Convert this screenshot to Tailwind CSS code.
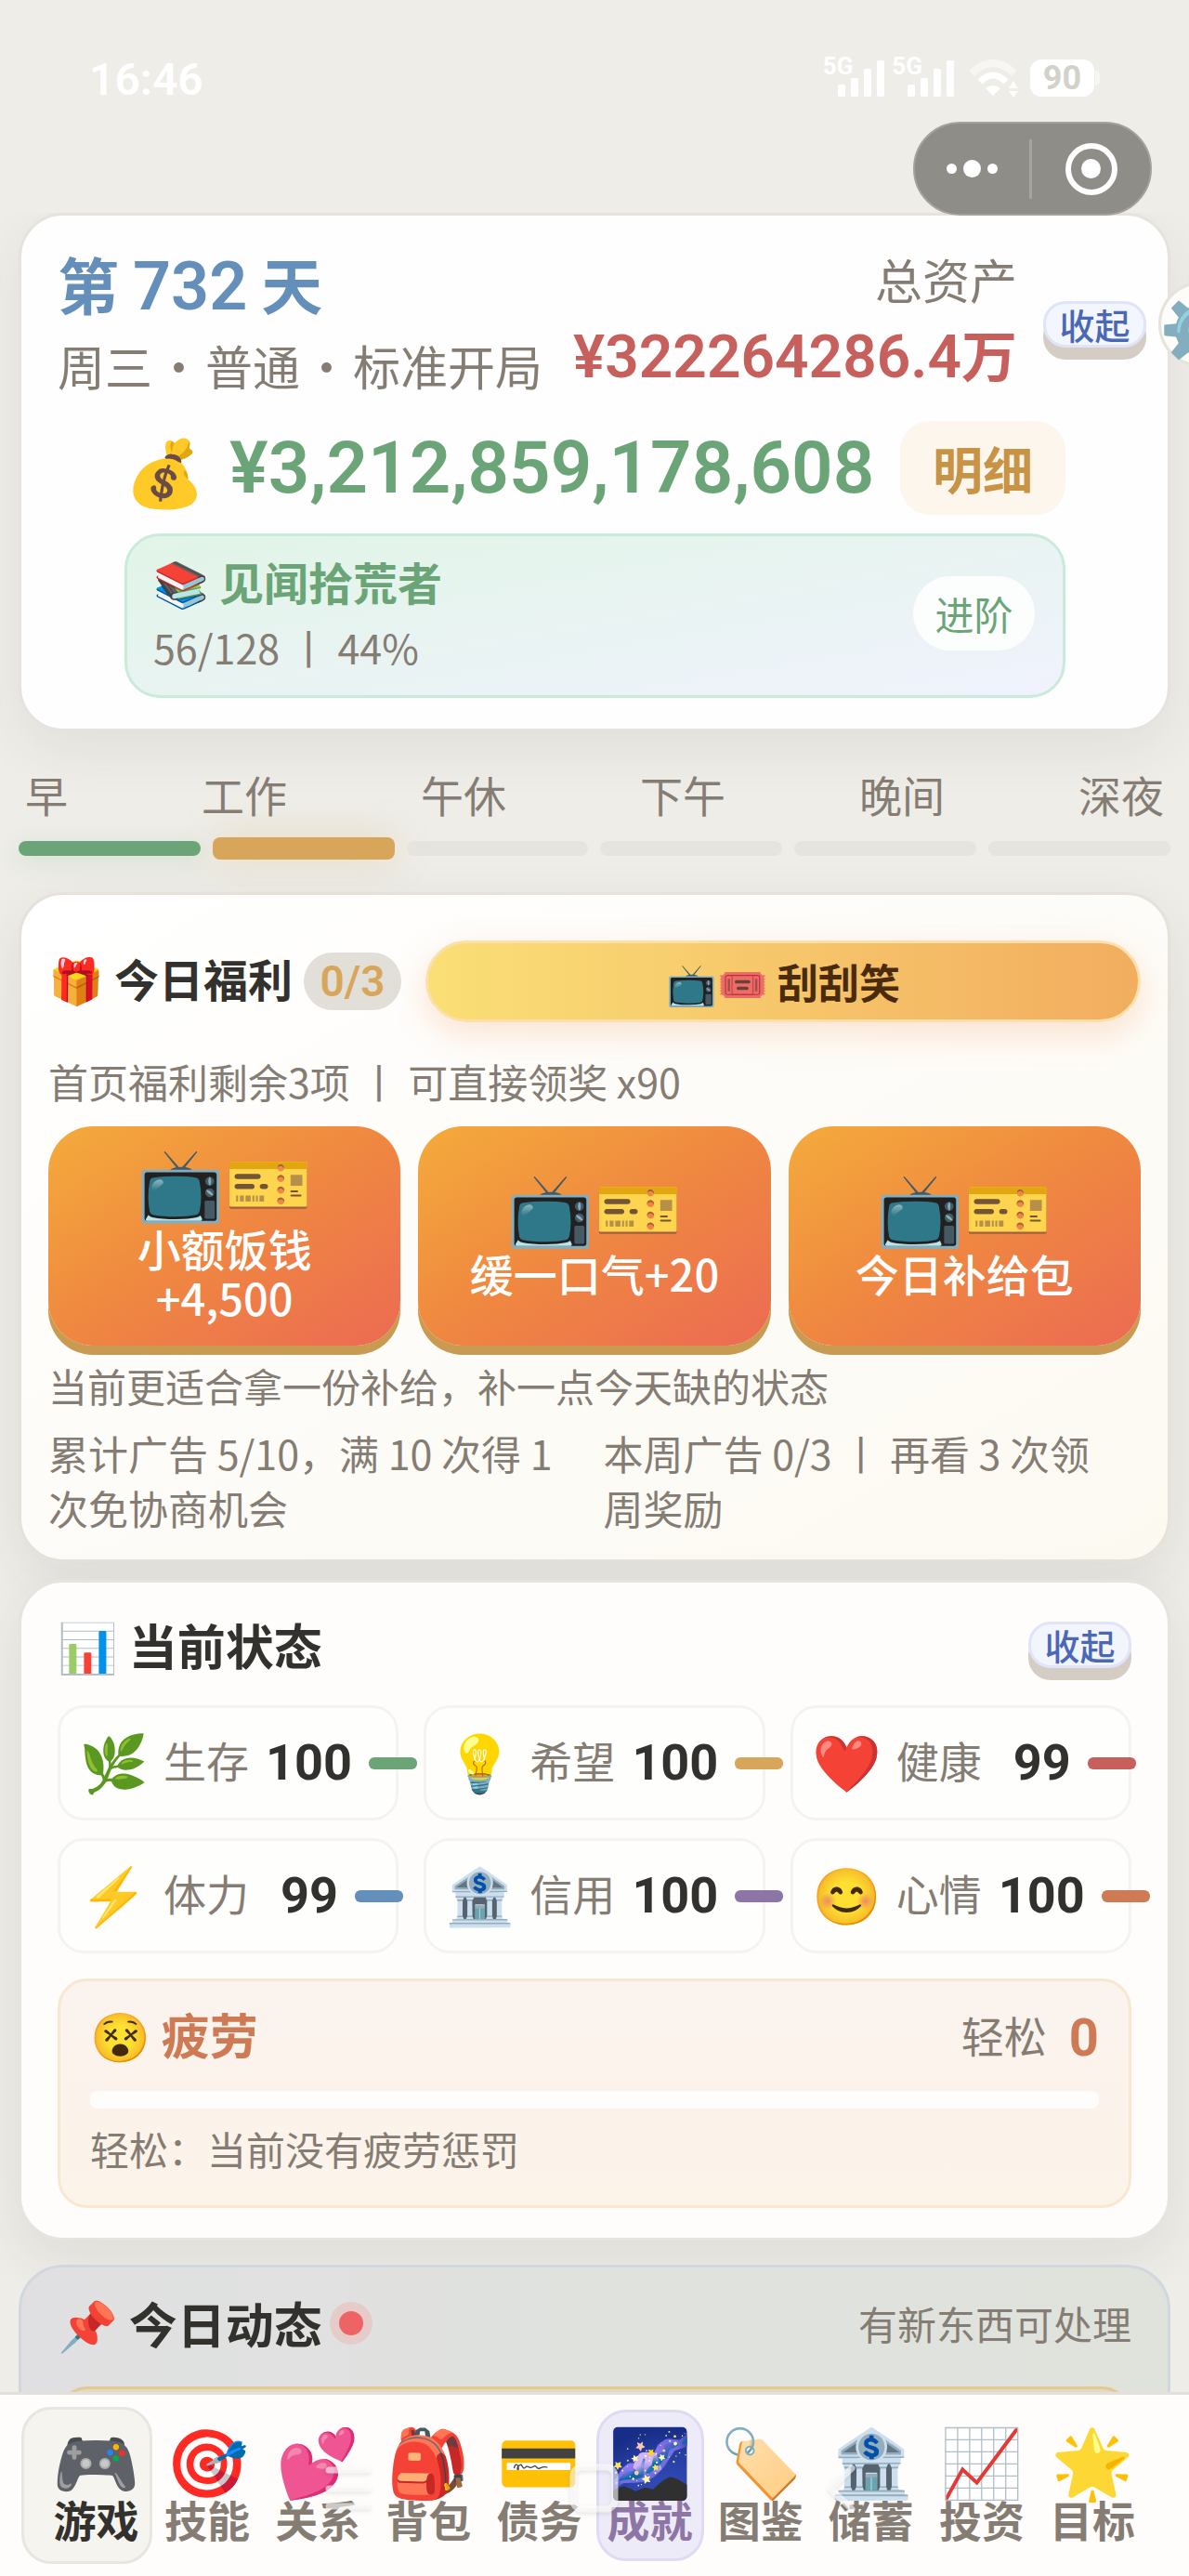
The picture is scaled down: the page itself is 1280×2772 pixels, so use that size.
<!DOCTYPE html>
<html lang="zh-CN">
<head>
    <meta charset="UTF-8">
    <meta name="viewport" content="width=device-width, initial-scale=1.0">
    <title>第 732 天</title>
    <script src="https://cdn.jsdelivr.net/npm/@tailwindcss/browser@4"></script>
</head>
<body class="relative flex h-screen flex-col overflow-hidden bg-[#eeede8] font-['Noto_Sans_CJK_SC',sans-serif] text-[#857d74]">

    <!-- Status bar -->
    <header class="mt-15 flex h-12 shrink-0 items-center justify-between px-24 text-white">
        <time class="pt-1 font-['Roboto',sans-serif] text-[48px] leading-none font-semibold">16:46</time>
        <div class="flex items-center">
            <div class="flex h-12">
                <span class="font-['Roboto',sans-serif] text-[26px] leading-[22px] font-bold">5G</span>
                <svg class="-ml-4 h-12 w-[50px]" viewBox="0 0 50 48" fill="currentColor" aria-hidden="true">
                    <rect x="0" y="31" width="8" height="13" rx="2"/><rect x="14" y="24" width="8" height="20" rx="2"/><rect x="28" y="14" width="8" height="30" rx="2"/><rect x="42" y="5" width="8" height="39" rx="2"/>
                </svg>
            </div>
            <div class="ml-2 flex h-12">
                <span class="font-['Roboto',sans-serif] text-[26px] leading-[22px] font-bold">5G</span>
                <svg class="-ml-4 h-12 w-[50px]" viewBox="0 0 50 48" fill="currentColor" aria-hidden="true">
                    <rect x="0" y="31" width="8" height="13" rx="2"/><rect x="14" y="24" width="8" height="20" rx="2"/><rect x="28" y="14" width="8" height="30" rx="2"/><rect x="42" y="5" width="8" height="39" rx="2"/>
                </svg>
            </div>
            <svg class="ml-4 h-12 w-[54px]" viewBox="0 0 54 48" fill="none" aria-hidden="true">
                <path d="M3 19 Q26 -3 49 19" stroke="#f7f6f3" stroke-width="8"/>
                <path d="M12 28 Q26 14 40 28" stroke="#fff" stroke-width="7"/>
                <path d="M18 35 Q26 29 34 35 L26 43Z" fill="#fff"/>
                <path d="M43 35 L48 27 L53 35Z M43 38 H53 L48 45Z" fill="#fff"/>
            </svg>
            <span class="ml-3 flex h-10 w-[69px] items-center justify-center rounded-xl bg-white font-['Roboto',sans-serif] text-[36px] leading-none font-bold text-[#d2d2cb]">90</span>
            <span class="ml-px h-4 w-[5px] rounded-r-md bg-[#f7f6f3]"></span>
        </div>
    </header>

    <!-- Mini program capsule -->
    <div class="relative z-10 mt-[23px] mr-10 -mb-[3px] flex h-[101px] w-[257px] shrink-0 items-center self-end rounded-full border-2 border-[#a3a29d] bg-[#8e8d88]">
        <button type="button" aria-label="更多" class="flex w-[123px] items-center justify-center gap-[7px]">
            <span class="size-[11px] rounded-full bg-white"></span>
            <span class="size-[19px] rounded-full bg-white"></span>
            <span class="size-[11px] rounded-full bg-white"></span>
        </button>
        <span class="h-16 w-[3px] bg-[#a5a49f]"></span>
        <button type="button" aria-label="关闭" class="flex flex-1 items-center justify-center">
            <span class="flex size-14 items-center justify-center rounded-full border-[6px] border-white"><span class="size-[21px] rounded-full bg-white"></span></span>
        </button>
    </div>

    <main class="min-h-0 flex-1 overflow-hidden px-5 pb-10">

        <!-- Day and assets -->
        <section class="rounded-[48px] border-3 border-[#e6e2dd] bg-[#fefefe] pt-8 pr-[23px] pb-[33px] pl-[39px] shadow-[0_20px_60px_rgba(60,55,40,0.07)]">
            <div class="flex items-center">
                <div class="flex-1">
                    <h1 class="text-[66px] leading-20 font-bold text-[#658fbb]">第 <span class="font-['Roboto',sans-serif] text-[72px] leading-none font-semibold">732</span> 天</h1>
                    <p class="mt-2 flex gap-[3px] text-[51px] leading-20 whitespace-nowrap"><span>周三</span><span>·</span><span>普通</span><span>·</span><span>标准开局</span></p>
                </div>
                <div class="self-start text-right">
                    <p class="text-[51px] leading-18">总资产</p>
                    <p class="mt-2 text-[60px] leading-18 font-bold whitespace-nowrap text-[#c75f5d]"><span class="font-['Roboto',sans-serif] text-[64px] leading-none font-semibold">¥322264286.4</span>万</p>
                </div>
                <button type="button" class="ml-7 h-[50px] w-[111px] shrink-0 rounded-3xl border-3 border-[#dfe4f7] bg-[#f3f6fe] text-[38px] leading-[40px] font-medium whitespace-nowrap text-[#4a68b5] shadow-[0_13px_0_#d5cdc3]">收起</button>
            </div>
            <div class="mt-5 mr-[87px] ml-[72px] flex h-[101px] items-center">
                <span class="text-[70px] leading-none">💰</span>
                <span class="ml-[26px] font-['Roboto',sans-serif] text-[78px] leading-none font-semibold text-[#6ba577]">¥3,212,859,178,608</span>
                <button type="button" class="ml-auto h-full w-[178px] rounded-[32px] bg-[#fcf6ed] text-[54px] leading-none font-bold text-[#c89345]">明细</button>
            </div>
            <div class="mt-5 mr-[87px] ml-[72px] flex items-center justify-between rounded-[38px] border-3 border-[#c9ebda] bg-linear-to-br from-[#e1f5e7] to-[#f0f2fd] pt-[14px] pr-[30px] pb-5 pl-[28px]">
                <div>
                    <p class="text-[48px] leading-17 font-bold text-[#6ba577]">📚 见闻拾荒者</p>
                    <p class="mt-[5px] text-[43px] leading-16">56/128 丨 44%</p>
                </div>
                <button type="button" class="h-20 w-[131px] rounded-[40px] bg-[#fcfefe] text-[42px] leading-none text-[#6ba577]">进阶</button>
            </div>
        </section>

        <!-- Time of day -->
        <section class="mt-[35px]">
            <div class="flex justify-between px-[7px] text-[46px] leading-16">
                <span>早</span><span>工作</span><span>午休</span><span>下午</span><span>晚间</span><span>深夜</span>
            </div>
            <div class="mt-[15px] flex h-6 items-center gap-[13px]">
                <span class="h-4 flex-1 rounded-lg bg-[#6ba577] shadow-[0_6px_24px_rgba(107,165,119,0.2)]"></span>
                <span class="h-6 flex-1 rounded-lg bg-[#d8a65a] shadow-[0_0_40px_rgba(216,166,90,0.3)]"></span>
                <span class="h-4 flex-1 rounded-lg bg-[#e6e4df]"></span>
                <span class="h-4 flex-1 rounded-lg bg-[#e6e4df]"></span>
                <span class="h-4 flex-1 rounded-lg bg-[#e6e4df]"></span>
                <span class="h-4 flex-1 rounded-lg bg-[#e6e4df]"></span>
            </div>
        </section>

        <!-- Daily welfare -->
        <section class="mt-[35px] rounded-[48px] border-3 border-[#e6e1db] bg-linear-to-br from-white to-[#fcf9f1] px-[29px] pt-[49px] pb-[26px] shadow-[0_20px_60px_rgba(60,55,40,0.09)]">
            <div class="flex items-center">
                <h2 class="pb-2 text-[48px] leading-[62px] font-bold text-[#32312e]">🎁 今日福利</h2>
                <span class="ml-3 flex h-[62px] w-[105px] items-center justify-center rounded-[31px] bg-[#e1dfd7] font-['Roboto',sans-serif] text-[46px] leading-none font-semibold text-[#d8a65a]">0/3</span>
                <button type="button" class="ml-[26px] h-[88px] flex-1 rounded-full border-3 border-[#fbe0ae] bg-linear-to-r from-[#fadf76] to-[#f2ad5f] text-[44px] leading-none font-bold text-[#4a2c0c] shadow-[0_12px_36px_rgba(240,130,60,0.22)]">📺🎟️ 刮刮笑</button>
            </div>
            <p class="mt-[34px] text-[43px] leading-[59px]">首页福利剩余3项 丨 可直接领奖 x90</p>
            <div class="mt-[19px] grid grid-cols-3 gap-[19px] text-[47px] leading-[53px] font-medium text-white">
                <button type="button" class="flex h-[236px] flex-col items-center justify-center rounded-[48px] bg-linear-to-br from-[#f4ab3b] via-[#ef8740] to-[#ec6a52] pb-2 shadow-[0_10px_0_#c99a52]">
                    <span class="mb-[10px] text-[76px] leading-[76px]">📺🎫</span>
                    <span>小额饭钱</span>
                    <span>+4,500</span>
                </button>
                <button type="button" class="flex h-[236px] flex-col items-center justify-center rounded-[48px] bg-linear-to-br from-[#f4ab3b] via-[#ef8740] to-[#ec6a52] pb-2 shadow-[0_10px_0_#c99a52]">
                    <span class="mb-[10px] text-[76px] leading-[76px]">📺🎫</span>
                    <span>缓一口气+20</span>
                </button>
                <button type="button" class="flex h-[236px] flex-col items-center justify-center rounded-[48px] bg-linear-to-br from-[#f4ab3b] via-[#ef8740] to-[#ec6a52] pb-2 shadow-[0_10px_0_#c99a52]">
                    <span class="mb-[10px] text-[76px] leading-[76px]">📺🎫</span>
                    <span>今日补给包</span>
                </button>
            </div>
            <p class="mt-[13px] text-[42px] leading-[59px]">当前更适合拿一份补给，补一点今天缺的状态</p>
            <div class="mt-[14px] grid grid-cols-2 gap-[19px] text-[43px] leading-[59px]">
                <p>累计广告 5/10，满 10 次得 1 次免协商机会</p>
                <p class="pr-7">本周广告 0/3 丨 再看 3 次领周奖励</p>
            </div>
        </section>

        <!-- Current status -->
        <section class="mt-[19px] rounded-[48px] border-3 border-[#e6e4df] bg-[#fefdfb] px-[39px] pt-[31px] pb-8 shadow-[0_20px_60px_rgba(60,55,40,0.09)]">
            <div class="flex items-center justify-between">
                <h2 class="text-[52px] leading-18 font-bold text-[#32312e]">📊 当前状态</h2>
                <button type="button" class="h-[50px] w-[111px] rounded-3xl border-3 border-[#dfe4f7] bg-[#f3f5fc] text-[38px] leading-[40px] font-medium text-[#4a68b5] shadow-[0_13px_0_#d5cdc3]">收起</button>
            </div>
            <dl class="mt-[29px] grid grid-cols-3 gap-x-[27px] gap-y-[19px] text-[46px] leading-none whitespace-nowrap">
                <div class="flex h-[124px] min-w-0 items-center rounded-[28px] border-3 border-[#f4f3f1] bg-[#fefefd] pl-5">
                    <dt class="flex items-center gap-4 pb-2"><span class="text-[60px]">🌿</span>生存</dt>
                    <dd class="ml-[18px] flex items-center gap-[18px]"><b class="w-[93px] shrink-0 text-right font-['Roboto',sans-serif] text-[54px] text-[#32312e]">100</b><i class="h-[13px] w-[52px] shrink-0 rounded-md bg-[#6ba577]"></i></dd>
                </div>
                <div class="flex h-[124px] min-w-0 items-center rounded-[28px] border-3 border-[#f4f3f1] bg-[#fefefd] pl-5">
                    <dt class="flex items-center gap-4 pb-2"><span class="text-[60px]">💡</span>希望</dt>
                    <dd class="ml-[18px] flex items-center gap-[18px]"><b class="w-[93px] shrink-0 text-right font-['Roboto',sans-serif] text-[54px] text-[#32312e]">100</b><i class="h-[13px] w-[52px] shrink-0 rounded-md bg-[#d8a65a]"></i></dd>
                </div>
                <div class="flex h-[124px] min-w-0 items-center rounded-[28px] border-3 border-[#f4f3f1] bg-[#fefefd] pl-5">
                    <dt class="flex items-center gap-4 pb-2"><span class="text-[60px]">❤️</span>健康</dt>
                    <dd class="ml-[18px] flex items-center gap-[18px]"><b class="w-[78px] shrink-0 text-right font-['Roboto',sans-serif] text-[54px] text-[#32312e]">99</b><i class="h-[13px] w-[52px] shrink-0 rounded-md bg-[#c75f5d]"></i></dd>
                </div>
                <div class="flex h-[124px] min-w-0 items-center rounded-[28px] border-3 border-[#f4f3f1] bg-[#fefefd] pl-5">
                    <dt class="flex items-center gap-4 pb-2"><span class="text-[60px]">⚡</span>体力</dt>
                    <dd class="ml-[18px] flex items-center gap-[18px]"><b class="w-[78px] shrink-0 text-right font-['Roboto',sans-serif] text-[54px] text-[#32312e]">99</b><i class="h-[13px] w-[52px] shrink-0 rounded-md bg-[#658fbb]"></i></dd>
                </div>
                <div class="flex h-[124px] min-w-0 items-center rounded-[28px] border-3 border-[#f4f3f1] bg-[#fefefd] pl-5">
                    <dt class="flex items-center gap-4 pb-2"><span class="text-[60px]">🏦</span>信用</dt>
                    <dd class="ml-[18px] flex items-center gap-[18px]"><b class="w-[93px] shrink-0 text-right font-['Roboto',sans-serif] text-[54px] text-[#32312e]">100</b><i class="h-[13px] w-[52px] shrink-0 rounded-md bg-[#8d76a5]"></i></dd>
                </div>
                <div class="flex h-[124px] min-w-0 items-center rounded-[28px] border-3 border-[#f4f3f1] bg-[#fefefd] pl-5">
                    <dt class="flex items-center gap-4 pb-2"><span class="text-[60px]">😊</span>心情</dt>
                    <dd class="ml-[18px] flex items-center gap-[18px]"><b class="w-[93px] shrink-0 text-right font-['Roboto',sans-serif] text-[54px] text-[#32312e]">100</b><i class="h-[13px] w-[52px] shrink-0 rounded-md bg-[#ce7b55]"></i></dd>
                </div>
            </dl>
            <div class="mt-[27px] rounded-[32px] border-3 border-[#f8e8d2] bg-linear-to-b from-[#fbf3ee] to-[#fcf3e9] px-8 pt-[21px] pb-8">
                <div class="flex items-center justify-between text-[46px] leading-18">
                    <h3 class="text-[52px] font-bold text-[#ce7b55]">😵 疲劳</h3>
                    <span class="flex items-center gap-6">轻松<b class="pt-2 font-['Roboto',sans-serif] text-[56px] leading-16 text-[#ce7b55]">0</b></span>
                </div>
                <div class="mt-[25px] h-[19px] rounded-lg bg-[#fefdfc]"></div>
                <p class="mt-[13px] text-[42px] leading-[59px]">轻松：当前没有疲劳惩罚</p>
            </div>
        </section>

        <!-- Today's news -->
        <section class="mt-[26px] rounded-[48px] border-3 border-[#d2d6df] bg-linear-to-r from-[#e0e0e2] via-[#e0e2de] to-[#e0e3dc] px-[39px] pt-6 pb-10">
            <div class="flex items-center">
                <h2 class="text-[52px] leading-18 font-bold text-[#32312e]">📌 今日动态</h2>
                <span class="ml-2 flex size-[46px] items-center justify-center rounded-full bg-[#e5ccc9]"><span class="size-[26px] rounded-full bg-[#ee6464]"></span></span>
                <span class="ml-auto text-[42px] leading-18">有新东西可处理</span>
            </div>
            <div class="mt-8 h-40 rounded-[32px] border-3 border-[#e2ca90] bg-[#e2dac3]"></div>
        </section>
    </main>

    <!-- Floating settings button, half hidden at the edge -->
    <button type="button" aria-label="设置" class="absolute top-[303px] -right-[59px] flex size-[92px] items-center justify-center rounded-full border-3 border-[#e6e2dc] bg-[#fdfcf9] text-[72px] leading-none">⚙️</button>

    <!-- Bottom tabs -->
    <nav class="relative flex h-[198px] shrink-0 items-center border-t-3 border-[#e3e0dc] bg-[#fefdfb] pr-[46px] pl-[23px] text-[46px] leading-[54px] font-bold whitespace-nowrap">
        <a href="#" class="mr-px flex h-[169px] w-[141px] shrink-0 flex-col items-center justify-center rounded-[32px] border-3 border-[#e8e6e0] bg-[#f5f4ef] pb-[6px] pl-5 text-[#32312e]"><span class="text-[76px] leading-[76px]">🎮</span>游戏</a>
        <div class="flex flex-1 justify-between">
            <a href="#" class="flex h-[163px] w-[116px] flex-col items-center justify-center pb-[6px]"><span class="text-[72px] leading-[76px]">🎯</span>技能</a>
            <a href="#" class="flex h-[163px] w-[116px] flex-col items-center justify-center pb-[6px]"><span class="text-[72px] leading-[76px]">💕</span>关系</a>
            <a href="#" class="flex h-[163px] w-[116px] flex-col items-center justify-center pb-[6px]"><span class="text-[72px] leading-[76px]">🎒</span>背包</a>
            <a href="#" class="flex h-[163px] w-[116px] flex-col items-center justify-center pb-[6px]"><span class="text-[72px] leading-[76px]">💳</span>债务</a>
            <a href="#" class="flex h-[163px] w-[116px] flex-col items-center justify-center rounded-[32px] border-3 border-[#dfdbf3] bg-[#edebf8] pb-[6px] text-[#8d76a5]"><span class="text-[72px] leading-[76px]">🌌</span>成就</a>
            <a href="#" class="flex h-[163px] w-[116px] flex-col items-center justify-center pb-[6px]"><span class="text-[72px] leading-[76px]">🏷️</span>图鉴</a>
            <a href="#" class="flex h-[163px] w-[116px] flex-col items-center justify-center pb-[6px]"><span class="text-[72px] leading-[76px]">🏦</span>储蓄</a>
            <a href="#" class="flex h-[163px] w-[116px] flex-col items-center justify-center pb-[6px]"><span class="text-[72px] leading-[76px]">📈</span>投资</a>
            <a href="#" class="flex h-[163px] w-[116px] flex-col items-center justify-center pb-[6px]"><span class="text-[72px] leading-[76px]">🌟</span>目标</a>
        </div>
        <!-- System navigation keys over the tabs -->
        <svg class="pointer-events-none absolute top-[70px] left-0 w-full drop-shadow-[0_2px_2px_rgba(0,0,0,0.15)]" viewBox="0 0 1280 64" fill="none" stroke="#fff" stroke-opacity="0.6" stroke-linecap="round" stroke-linejoin="round" aria-hidden="true">
            <path d="M354 11H396M354 31H396M354 50H396" stroke-width="7"/>
            <rect x="617" y="8" width="45" height="45" rx="9" stroke-width="7"/>
            <path d="M917 9L894 31L917 53" stroke-width="7"/>
        </svg>
    </nav>
</body>
</html>
